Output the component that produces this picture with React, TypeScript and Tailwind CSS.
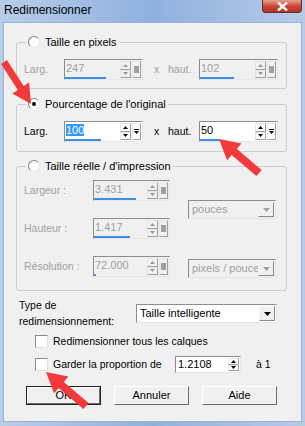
import React from "react";

type Pt = [number, number];

// builds a block arrow polygon from tail to tip
function arrowPoints(tail: Pt, tip: Pt, shaft: number, head: number, headLen: number) {
  const dx = tip[0] - tail[0];
  const dy = tip[1] - tail[1];
  const len = Math.hypot(dx, dy);
  const ux = dx / len;
  const uy = dy / len;
  const nx = -uy;
  const ny = ux;
  const bx = tip[0] - ux * headLen;
  const by = tip[1] - uy * headLen;
  const pts: Pt[] = [
    [tail[0] + (nx * shaft) / 2, tail[1] + (ny * shaft) / 2],
    [bx + (nx * shaft) / 2, by + (ny * shaft) / 2],
    [bx + (nx * head) / 2, by + (ny * head) / 2],
    tip,
    [bx - (nx * head) / 2, by - (ny * head) / 2],
    [bx - (nx * shaft) / 2, by - (ny * shaft) / 2],
    [tail[0] - (nx * shaft) / 2, tail[1] - (ny * shaft) / 2],
  ];
  return pts.map((p) => p[0].toFixed(1) + "," + p[1].toFixed(1)).join(" ");
}

function Radio({ checked }: { checked?: boolean }) {
  return (
    <div className="w-[12px] h-[12px] rounded-full border border-[#7f7f7f] border-b-[#e8e8e8] border-r-[#e8e8e8] bg-white flex items-center justify-center">
      {checked && <div className="w-[4px] h-[4px] rounded-full bg-black" />}
    </div>
  );
}

function Checkbox() {
  return (
    <div className="w-[13px] h-[13px] border border-[#8b8b8b] border-b-[#e3e3e3] border-r-[#e3e3e3] bg-white" />
  );
}

function Tri({ up, color }: { up?: boolean; color: string }) {
  return (
    <svg width="5" height="3" viewBox="0 0 5 3">
      <polygon points={up ? "2.5,0 5,3 0,3" : "0,0 5,0 2.5,3"} fill={color} />
    </svg>
  );
}

function SpinBox({
  value,
  width,
  bar,
  enabled,
  selected,
}: {
  value: string;
  width: string;
  bar: number;
  enabled?: boolean;
  selected?: boolean;
}) {
  const arrow = enabled ? "#000" : "#9a9a9a";
  return (
    <div
      className={`${width} h-[21px] flex border border-[#8c8c8c] border-b-[#e6e6e6] border-r-[#e6e6e6] ${
        enabled ? "bg-white" : "bg-[#f0f0f0]"
      }`}
    >
      <div className="flex-1 flex flex-col justify-between pt-[1px]">
        <div className={`pl-[1px] leading-[15px] text-[11px] ${enabled ? "text-black" : "text-[#a0a0a0]"}`}>
          {selected ? <span className="bg-[#3399ff] text-white">{value}</span> : value}
        </div>
        <div className="h-[2px] bg-[#3d8ee6]" style={{ width: bar }} />
      </div>
      <div className="w-[11px] flex flex-col py-[1px]">
        <div className="flex-1 border border-[#e6e6e6] border-b-[#a0a0a0] border-r-[#a0a0a0] flex items-center justify-center">
          <Tri up color={arrow} />
        </div>
        <div className="flex-1 border border-[#e6e6e6] border-b-[#a0a0a0] border-r-[#a0a0a0] flex items-center justify-center">
          <Tri color={arrow} />
        </div>
      </div>
      <div className="w-[9px] my-[1px] ml-[1px] mr-[1px] flex items-center justify-center border border-[#e6e6e6] border-b-[#a0a0a0] border-r-[#a0a0a0]">
        {enabled ? (
          <div className="flex flex-col items-center gap-[1px]">
            <div className="w-[5px] h-[1px] bg-black" />
            <Tri color="#000" />
          </div>
        ) : (
          <div className="w-[5px] h-[7px] bg-[#a0a0a0]" />
        )}
      </div>
    </div>
  );
}

function Select({ value, width, enabled }: { value: string; width: string; enabled?: boolean }) {
  return (
    <div
      className={`${width} h-[19px] flex border border-[#8c8c8c] border-b-[#e6e6e6] border-r-[#e6e6e6] ${
        enabled ? "bg-white text-black" : "bg-[#f0f0f0] text-[#a0a0a0]"
      }`}
    >
      <div className="flex-1 overflow-hidden whitespace-nowrap pl-[3px] leading-[17px] text-[11px]">{value}</div>
      <div className="w-[16px] my-[1px] mr-[1px] border border-[#f4f4f4] border-b-[#8a8a8a] border-r-[#8a8a8a] bg-[#f0f0f0] flex items-center justify-center">
        <svg width="7" height="4" viewBox="0 0 7 4">
          <polygon points="0,0 7,0 3.5,4" fill={enabled ? "#000" : "#a0a0a0"} />
        </svg>
      </div>
    </div>
  );
}

function Button({ label, def }: { label: string; def?: boolean }) {
  return (
    <div className={`w-[75px] h-[19px] flex ${def ? "border border-[#222]" : ""}`}>
      <div className="flex-1 border border-white border-b-[#6a6a6a] border-r-[#6a6a6a] bg-[#f0f0f0] flex items-center justify-center text-[11px] text-black">
        {label}
      </div>
    </div>
  );
}

export default function App() {
  const arrows = [
    arrowPoints([4, 62], [31, 104], 7, 20, 19),
    arrowPoints([259, 173], [219, 139], 8, 22, 20),
    arrowPoints([86, 406], [46, 372], 8, 22, 20),
  ];

  return (
    <div
      className="relative w-[305px] h-[426px] overflow-hidden flex flex-col bg-gradient-to-r from-[#b9cde9] via-[#8fb0df] to-[#b5cbe8]"
      style={{ fontFamily: '"Liberation Sans", Arial, sans-serif' }}
    >
      <div className="h-[22px] flex items-start">
        <div className="pl-[4px] pt-[3px] text-[12px] leading-[14px] text-black">Redimensionner</div>
        <div className="ml-auto mr-[3px] w-[40px] h-[13px] rounded-b-[4px] border border-[#6b2a22] border-t-0 bg-gradient-to-b from-[#e6a090] via-[#c9463a] to-[#b83125] flex items-center justify-center">
          <svg width="11" height="9" viewBox="0 0 11 9">
            <path d="M1 0.5 L10 8.5 M10 0.5 L1 8.5" stroke="#fff" strokeWidth="2.4" />
          </svg>
        </div>
      </div>

      <div className="mx-[3px] h-[400px] bg-[#f0f0f0] border border-[#9fb3cf] text-[10.5px] text-black flex flex-col px-[12px]">
        {/* Taille en pixels */}
        <fieldset className="mt-[12px] w-[271px] border border-[#c9cdd2] rounded-[3px] px-[7px] pt-[10px] pb-[8px]">
          <legend className="ml-[2px] px-[2px] h-[14px] flex items-center gap-[5px] leading-[14px]">
            <Radio />
            <span className="text-[11px]">Taille en pixels</span>
          </legend>
          <div className="flex items-center text-[#a0a0a0]">
            <span className="w-[40px]">Larg.</span>
            <SpinBox value="247" width="w-[79px]" bar={41} />
            <span className="w-[25px] pl-[11px]">x</span>
            <span className="w-[31px]">haut.</span>
            <SpinBox value="102" width="w-[79px]" bar={34} />
          </div>
        </fieldset>

        {/* Pourcentage */}
        <fieldset className="mt-[8px] w-[271px] border border-[#c9cdd2] rounded-[3px] px-[7px] pt-[10px] pb-[9px]">
          <legend className="ml-[2px] px-[2px] h-[14px] flex items-center gap-[5px] leading-[14px]">
            <Radio checked />
            <span className="text-[11px]">Pourcentage de l'original</span>
          </legend>
          <div className="flex items-center">
            <span className="w-[40px]">Larg.</span>
            <SpinBox value="100" width="w-[79px]" bar={36} enabled selected />
            <span className="w-[25px] pl-[11px]">x</span>
            <span className="w-[31px]">haut.</span>
            <SpinBox value="50" width="w-[79px]" bar={20} enabled />
          </div>
        </fieldset>

        {/* Taille réelle */}
        <fieldset className="mt-[7px] w-[271px] border border-[#c9cdd2] rounded-[3px] px-[7px] pt-[7px] pb-[12px]">
          <legend className="ml-[2px] px-[2px] h-[14px] flex items-center gap-[5px] leading-[14px]">
            <Radio />
            <span className="text-[11px]">Taille réelle / d'impression</span>
          </legend>
          <div className="flex text-[#a0a0a0]">
            <div className="flex flex-col gap-[17px]">
              <div className="flex items-center">
                <span className="w-[69px]">Largeur :</span>
                <SpinBox value="3.431" width="w-[77px]" bar={42} />
              </div>
              <div className="flex items-center">
                <span className="w-[69px]">Hauteur :</span>
                <SpinBox value="1.417" width="w-[77px]" bar={36} />
              </div>
              <div className="flex items-center">
                <span className="w-[69px]">Résolution :</span>
                <SpinBox value="72.000" width="w-[77px]" bar={2} />
              </div>
            </div>
            <div className="ml-[18px] flex flex-col">
              <div className="mt-[20px]">
                <Select value="pouces" width="w-[88px]" />
              </div>
              <div className="mt-[40px]">
                <Select value="pixels / pouce" width="w-[88px]" />
              </div>
            </div>
          </div>
        </fieldset>

        {/* Type de redimensionnement */}
        <div className="mt-[6px] flex items-start">
          <div className="ml-[3px] w-[117px] leading-[16px]">
            Type de
            <br />
            redimensionnement:
          </div>
          <div className="mt-[7px]">
            <Select value="Taille intelligente" width="w-[141px]" enabled />
          </div>
        </div>

        <div className="mt-[6px] ml-[19px] flex items-center gap-[5px] h-[13px]">
          <Checkbox />
          <span>Redimensionner tous les calques</span>
        </div>

        <div className="mt-[8px] ml-[19px] flex items-center h-[17px]">
          <Checkbox />
          <span className="ml-[5px] w-[122px] whitespace-nowrap">Garder la proportion de</span>
          <div className="w-[66px] h-[17px] flex border border-[#8c8c8c] border-b-[#e6e6e6] border-r-[#e6e6e6] bg-white">
            <div className="flex-1 pl-[2px] leading-[15px] text-[11px]">1.2108</div>
            <div className="w-[11px] mr-[1px] flex flex-col py-[1px]">
              <div className="flex-1 border border-[#e6e6e6] border-b-[#a0a0a0] border-r-[#a0a0a0] flex items-center justify-center">
                <Tri up color="#000" />
              </div>
              <div className="flex-1 border border-[#e6e6e6] border-b-[#a0a0a0] border-r-[#a0a0a0] flex items-center justify-center">
                <Tri color="#000" />
              </div>
            </div>
          </div>
          <span className="ml-[15px]">à 1</span>
        </div>

        <div className="mt-[13px] ml-[10px] flex gap-[13px]">
          <Button label="OK" def />
          <Button label="Annuler" />
          <Button label="Aide" />
        </div>
      </div>
      <div className="h-[4px]" />

      <svg className="absolute inset-0 pointer-events-none" width="305" height="426">
        {arrows.map((p, i) => (
          <polygon key={i} points={p} fill="#f23a3a" />
        ))}
      </svg>
    </div>
  );
}
